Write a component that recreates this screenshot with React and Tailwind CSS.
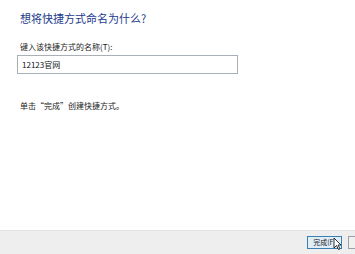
import React from 'react';

const font = { fontFamily: '"Noto Sans CJK SC", "Liberation Sans", sans-serif' };

export default function App() {
  return (
    <div className="w-[355px] h-[254px] bg-white flex flex-col overflow-hidden" style={font}>
      <div className="flex-1 flex flex-col pl-[20px]">
        <div className="mt-[11px] text-[11px] leading-[14px] text-[#1c3a8c]">想将快捷方式命名为什么?</div>
        <div className="mt-[17px] text-[8px] leading-[10px] text-[#222]">键入该快捷方式的名称(T):</div>
        <div className="mt-[3px] -ml-[3px] w-[221px] h-[19px] border border-[#a9b0b8] flex items-center pl-[4px] text-[8px] text-[#111]">
          12123官网
        </div>
        <div className="mt-[27px] text-[8px] leading-[10px] text-[#222]">单击“完成”创建快捷方式。</div>
      </div>
      <div className="h-[24px] bg-[#efeeef] border-t border-[#e4e3e4] flex items-center justify-end gap-[6px]">
        <div className="relative w-[35px] h-[13px] border border-[#3c7fb1] bg-[#e0eef8] flex items-center justify-center text-[7px] text-[#222]">
          完成(F)
          <svg className="absolute left-[25px] top-[0px]" width="9" height="13" viewBox="0 0 9 13">
            <path d="M1 1 L1 11 L3.5 8.5 L5.5 12.5 L7 11.8 L5 8 L8 8 Z" fill="#fff" stroke="#000" strokeWidth="0.8" />
          </svg>
        </div>
        <div className="w-[7px] h-[13px] border border-l-[#9aa0a6] border-y-[#9aa0a6] border-r-0 bg-[#f0f0f0]" />
      </div>
    </div>
  );
}
